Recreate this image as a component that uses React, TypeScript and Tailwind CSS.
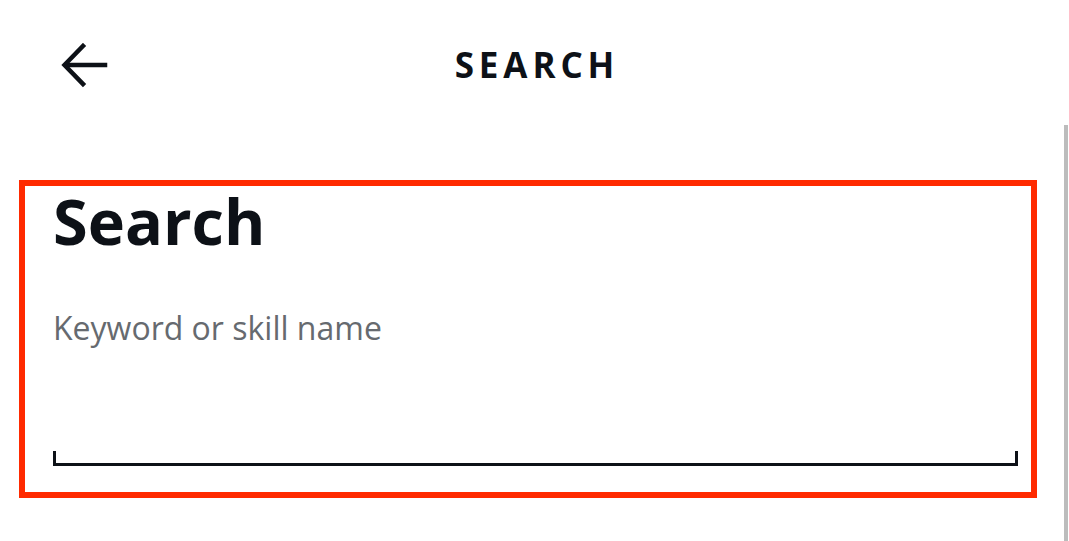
const ArrowBack = () => (
  <svg width="48" height="48" viewBox="0 0 48 48" fill="none" stroke="#0d1117" strokeWidth="4.5" strokeLinecap="square">
    <path d="M44 22H6" />
    <path d="M22 3L3.5 22L22 41" />
  </svg>
);

export default function App() {
  return (
    <div className="relative w-[1069px] h-[541px] overflow-hidden bg-white font-['Open_Sans',sans-serif] text-[#0d1117]">
      <header className="relative flex h-[128px] items-center justify-center">
        <button className="absolute left-[61px] top-[43px]">
          <ArrowBack />
        </button>
        <h1 className="pl-[5px] text-[35px] font-bold leading-none tracking-[0.14em]">SEARCH</h1>
      </header>

      <div className="absolute right-[1px] top-[125px] bottom-0 w-[4px] bg-[#bcbcbc]" />

      <section className="ml-[19px] mt-[52px] h-[318px] w-[1018px] border-[6px] border-[#ff2a00] pl-[28px] pr-[12px] pt-[3px]">
        <h2 className="text-[63px] font-bold leading-none">Search</h2>
        <p className="mt-[60px] text-[32px] leading-none text-[#666a6f]">Keyword or skill name</p>
        <div className="mt-[107px] h-[15px] w-[965px] border-x-[3px] border-b-[3px] border-[#0d1117]" />
      </section>
    </div>
  );
}
